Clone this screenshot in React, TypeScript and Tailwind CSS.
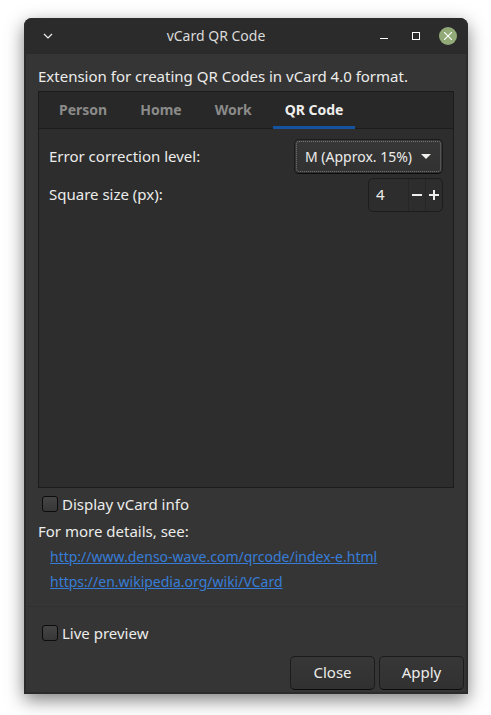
import { useState } from "react";

const tabs = ["Person", "Home", "Work", "QR Code"];

const levels = ["L (Approx. 7%)", "M (Approx. 15%)", "Q (Approx. 25%)", "H (Approx. 30%)"];

const links = [
  "http://www.denso-wave.com/qrcode/index-e.html",
  "https://en.wikipedia.org/wiki/VCard",
];

function TitleBar() {
  return (
    <header className="flex h-9 items-center bg-[#2b2b2b] pr-[11px] pl-[18px] text-[#dadada]">
      <button type="button" aria-label="Window menu" className="mr-[10px] flex size-3 items-center justify-center">
        <svg width="10" height="6" viewBox="0 0 10 6" fill="none" stroke="#f0f0f0" strokeWidth="1.2">
          <path d="M1 1l4 4 4-4" />
        </svg>
      </button>
      <h1 className="flex-1 text-center text-sm">vCard QR Code</h1>
      <div className="flex items-center">
        <button type="button" aria-label="Minimize" className="flex size-8 items-center justify-center">
          <svg width="8" height="8" viewBox="0 0 8 8" shapeRendering="crispEdges">
            <path d="M0 6h8v1H0z" fill="#ffffff" />
          </svg>
        </button>
        <button type="button" aria-label="Maximize" className="flex size-8 items-center justify-center">
          <svg width="8" height="8" viewBox="0 0 8 8" shapeRendering="crispEdges">
            <path d="M.5.5h7v7h-7z" fill="none" stroke="#ffffff" />
          </svg>
        </button>
        <button
          type="button"
          aria-label="Close window"
          className="ml-[7px] flex size-[18px] items-center justify-center rounded-full bg-[#92a978]"
        >
          <svg width="8" height="8" viewBox="0 0 8 8" stroke="#ffffff" strokeWidth="1.1">
            <path d="M0 0l8 8M8 0L0 8" />
          </svg>
        </button>
      </div>
    </header>
  );
}

function CheckRow({ id, label }: { id: string; label: string }) {
  return (
    <div className="flex h-6 items-center gap-1 pl-1">
      <input
        id={id}
        type="checkbox"
        className="size-4 appearance-none rounded-[3px] border border-[#0c0c0c] bg-linear-to-b from-[#454545] to-[#373737] checked:bg-[#15539e]"
      />
      <label htmlFor={id}>{label}</label>
    </div>
  );
}

function ActionButton({ label }: { label: string }) {
  return (
    <button
      type="button"
      className="h-[34px] w-[85px] rounded-[5px] border border-[#1c1c1c] border-b-[#0c0c0c] bg-linear-to-b from-[#373737] to-[#313131] pb-[2px]"
    >
      {label}
    </button>
  );
}

export default function App() {
  const [tab, setTab] = useState("QR Code");
  const [level, setLevel] = useState("M (Approx. 15%)");
  const [size, setSize] = useState(4);

  return (
    <div className="flex min-h-screen flex-col bg-white pt-[18px] pr-[23px] pb-[21px] pl-6 font-['Noto_Sans',sans-serif] text-[15px] leading-5 text-[#ececea]">
      <main className="flex flex-1 flex-col overflow-hidden rounded-t-lg bg-[#353535] shadow-[0_6px_18px_rgba(0,0,0,0.5)]">
        <TitleBar />
        <div className="flex flex-1 flex-col border-2 border-t-0 border-[#2b2b2b]">
          <div className="flex flex-1 flex-col px-3 pt-3">
            <p className="pb-[5px]">Extension for creating QR Codes in vCard 4.0 format.</p>

            <section className="flex flex-1 flex-col border border-[#1c1c1c] bg-[#2d2d2d]">
              <div role="tablist" className="flex h-[37px] gap-[9px] border-b border-[#1c1c1c] bg-[#282828] px-2">
                {tabs.map((name) => (
                  <button
                    key={name}
                    type="button"
                    role="tab"
                    aria-selected={name === tab}
                    onClick={() => setTab(name)}
                    className={
                      name === tab
                        ? "-mb-px border-b-3 border-[#15539e] px-3 pt-[2px] text-sm font-bold text-[#eeeeec]"
                        : "-mb-px border-b-3 border-transparent px-3 pt-[2px] text-sm font-bold text-[#8b8b8a]"
                    }
                  >
                    {name}
                  </button>
                ))}
              </div>
              <div className="flex flex-col gap-1 p-[10px]">
                <div className="flex items-center justify-between">
                  <label htmlFor="level" className="pb-[2px]">
                    Error correction level:
                  </label>
                  <div className="relative">
                    <select
                      id="level"
                      value={level}
                      onChange={(e) => setLevel(e.target.value)}
                      className="block h-[35px] w-[149px] appearance-none rounded-[5px] border border-[#1c1c1c] border-b-[#0c0c0c] bg-linear-to-b from-[#373737] to-[#313131] pl-[10px] text-sm outline-1 -outline-offset-3 outline-dotted outline-[#777777]"
                    >
                      {levels.map((l) => (
                        <option key={l}>{l}</option>
                      ))}
                    </select>
                    <svg
                      className="pointer-events-none absolute top-[15px] right-3"
                      width="10"
                      height="5"
                      viewBox="0 0 10 5"
                      fill="#eeeeec"
                    >
                      <path d="M0 0h10L5 5z" />
                    </svg>
                  </div>
                </div>
                <div className="flex items-center justify-between">
                  <label htmlFor="size" className="pb-[2px]">
                    Square size (px):
                  </label>
                  <div className="flex h-[34px] w-[75px] rounded-[5px] border border-[#1c1c1c]">
                    <input
                      id="size"
                      value={size}
                      inputMode="numeric"
                      onChange={(e) => setSize(Number(e.target.value) || 0)}
                      className="w-0 flex-1 bg-transparent pb-[2px] pl-[7px] outline-none"
                    />
                    <button
                      type="button"
                      aria-label="Decrease"
                      onClick={() => setSize(size - 1)}
                      className="flex w-[17px] items-center justify-center border-l border-[#262626]"
                    >
                      <svg width="10" height="10" viewBox="0 0 10 10" fill="#eeeeec">
                        <path d="M0 4h10v2H0z" />
                      </svg>
                    </button>
                    <button
                      type="button"
                      aria-label="Increase"
                      onClick={() => setSize(size + 1)}
                      className="flex w-[17px] items-center justify-center border-l border-[#262626]"
                    >
                      <svg width="10" height="10" viewBox="0 0 10 10" fill="#eeeeec">
                        <path d="M0 4h4V0h2v4h4v2H6v4H4V6H0z" />
                      </svg>
                    </button>
                  </div>
                </div>
              </div>
            </section>

            <div className="pt-1">
              <CheckRow id="info" label="Display vCard info" />
            </div>
            <p className="pt-[5px] pb-[3px]">For more details, see:</p>
            <ul className="pb-3 pl-3 text-sm">
              {links.map((url) => (
                <li key={url} className="h-[25px] leading-[25px]">
                  <a href={url} className="text-[#377dd8] underline">
                    {url}
                  </a>
                </li>
              ))}
            </ul>
          </div>

          <hr className="mx-[2px] border-[#303030]" />
          <div className="px-3 pt-[14px]">
            <CheckRow id="preview" label="Live preview" />
          </div>
          <div className="flex justify-end gap-1 px-[2px] pt-[11px] pb-[2px]">
            <ActionButton label="Close" />
            <ActionButton label="Apply" />
          </div>
        </div>
      </main>
    </div>
  );
}
